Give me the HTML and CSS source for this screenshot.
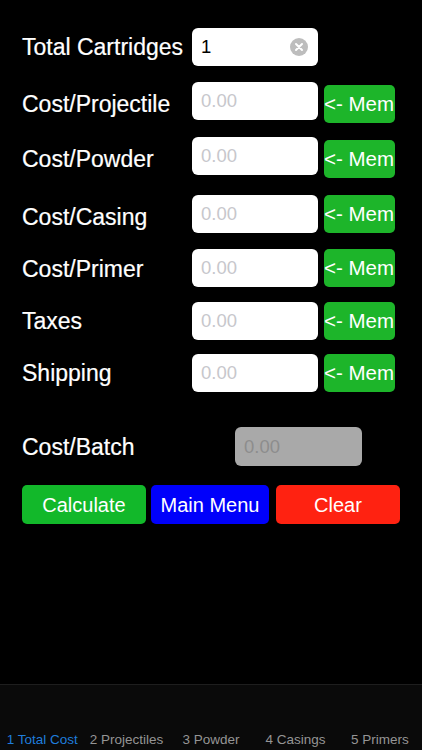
FILE: index.html
```html
<!DOCTYPE html>
<html>
<head>
<meta charset="utf-8">
<link rel="stylesheet" href="styles.css">
</head>
<body>
<div class="app">
  <main class="form">
    <div class="row r1">
      <span class="label">Total Cartridges</span>
      <div class="field"><span class="value">1</span>
        <span class="clear"><svg viewBox="0 0 18 18" width="18" height="18"><circle cx="9" cy="9" r="9" fill="#bdbdbd"/><path d="M6 6L12 12M12 6L6 12" stroke="#fff" stroke-width="2" stroke-linecap="round"/></svg></span>
      </div>
    </div>
    <div class="row r2">
      <span class="label">Cost/Projectile</span>
      <div class="field"><span class="ph">0.00</span></div>
      <span class="mem low">&lt;- Mem</span>
    </div>
    <div class="row r3">
      <span class="label">Cost/Powder</span>
      <div class="field"><span class="ph">0.00</span></div>
      <span class="mem low">&lt;- Mem</span>
    </div>
    <div class="row r4">
      <span class="label">Cost/Casing</span>
      <div class="field"><span class="ph">0.00</span></div>
      <span class="mem">&lt;- Mem</span>
    </div>
    <div class="row r5">
      <span class="label">Cost/Primer</span>
      <div class="field"><span class="ph">0.00</span></div>
      <span class="mem">&lt;- Mem</span>
    </div>
    <div class="row r6">
      <span class="label">Taxes</span>
      <div class="field"><span class="ph">0.00</span></div>
      <span class="mem">&lt;- Mem</span>
    </div>
    <div class="row r7">
      <span class="label">Shipping</span>
      <div class="field"><span class="ph">0.00</span></div>
      <span class="mem">&lt;- Mem</span>
    </div>
    <div class="row batch">
      <span class="label batch-label">Cost/Batch</span>
      <div class="field disabled"><span class="ph-dark">0.00</span></div>
    </div>
    <div class="actions">
      <span class="btn calc">Calculate</span>
      <span class="btn menu">Main Menu</span>
      <span class="btn clearbtn">Clear</span>
    </div>
  </main>
  <nav class="tabbar">
    <span class="tab active">1 Total Cost</span>
    <span class="tab">2 Projectiles</span>
    <span class="tab">3 Powder</span>
    <span class="tab">4 Casings</span>
    <span class="tab">5 Primers</span>
  </nav>
</div>
</body>
</html>
```

FILE: styles.css
```css
* { box-sizing: border-box; }
html, body {
  margin: 0;
  padding: 0;
  background: #000;
  font-family: "Liberation Sans", Arial, Helvetica, sans-serif;
}
.app {
  height: 750px;
  display: flex;
  flex-direction: column;
}
.form {
  flex: 1;
  padding: 28px 0 0 22px;
}
.row {
  display: flex;
  align-items: flex-start;
  height: 38px;
}
.r2 { margin-top: 16px; }
.r3 { margin-top: 17px; }
.r4 { margin-top: 20px; }
.r5 { margin-top: 16px; }
.r6 { margin-top: 15px; }
.r7 { margin-top: 14px; }
.label {
  width: 170px;
  color: #fff;
  font-size: 23px;
  line-height: 38px;
  padding-top: 3px;
  white-space: nowrap;
  -webkit-text-stroke: 0.2px #fff;
}
.r1 .label { padding-top: 0; }
.r5 .label { padding-top: 1px; }
.r6 .label, .r7 .label { padding-top: 0; }
.field {
  width: 126px;
  height: 38px;
  background: #fff;
  border-radius: 6px;
  display: flex;
  align-items: center;
  padding-left: 9px;
  position: relative;
}
.value {
  font-size: 18.5px;
  color: #000;
}
.ph {
  font-size: 18.5px;
  color: #c7c7cc;
}
.clear {
  position: absolute;
  right: 10px;
  top: 10px;
  width: 18px;
  height: 18px;
  display: block;
}
.clear svg { display: block; }
.mem {
  margin-left: 6px;
  width: 71px;
  height: 38px;
  background: #1db52a;
  border-radius: 5px;
  color: #fff;
  font-size: 20.5px;
  line-height: 38px;
  white-space: nowrap;
  overflow: visible;
}
.mem.low { margin-top: 3px; }
.batch {
  margin-top: 35px;
  height: 39px;
}
.batch-label {
  width: 213px;
  padding-top: 1px;
}
.field.disabled {
  width: 127px;
  height: 39px;
  background: #a9a9a9;
}
.ph-dark {
  font-size: 18.5px;
  color: #8d8d8d;
}
.actions {
  display: flex;
  margin-top: 19px;
  height: 39px;
}
.btn {
  height: 39px;
  border-radius: 5px;
  color: #fff;
  font-size: 20px;
  display: flex;
  align-items: center;
  justify-content: center;
  padding-top: 1px;
}
.calc { width: 124px; background: #12b82a; }
.menu { width: 118px; background: #0000fb; margin-left: 5px; }
.clearbtn { width: 124px; background: #ff2211; margin-left: 7px; }
.tabbar {
  height: 66px;
  border-top: 1px solid #1e1e1e;
  background: #0a0a0a;
  display: flex;
  align-items: flex-end;
  padding-bottom: 2px;
}
.tab {
  flex: 1;
  text-align: center;
  font-size: 13.5px;
  color: #959595;
  white-space: nowrap;
  line-height: 16px;
}
.tab.active { color: #1f7ddc; }
```
